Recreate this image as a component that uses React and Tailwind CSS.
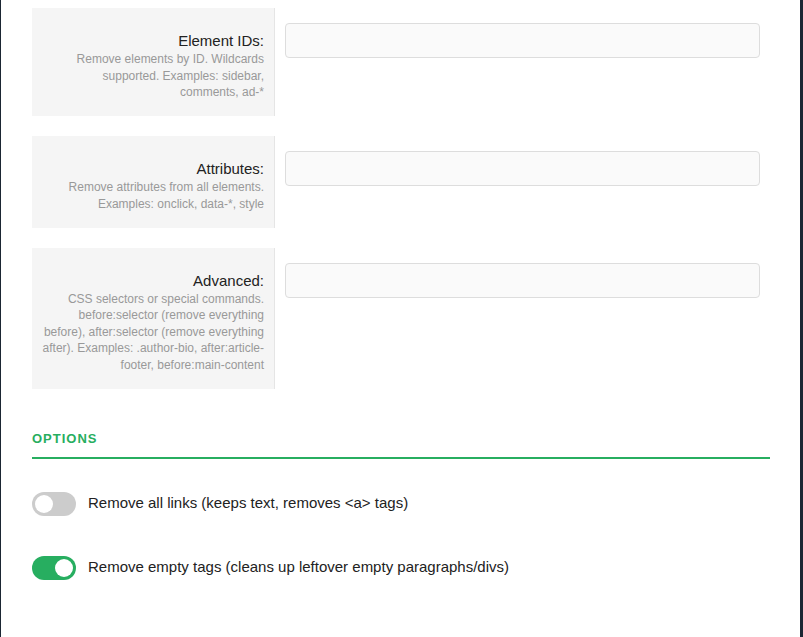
import { useState } from 'react'

const fields = [
  {
    label: 'Element IDs:',
    hint: 'Remove elements by ID. Wildcards supported. Examples: sidebar, comments, ad-*',
  },
  {
    label: 'Attributes:',
    hint: 'Remove attributes from all elements. Examples: onclick, data-*, style',
  },
  {
    label: 'Advanced:',
    hint: 'CSS selectors or special commands. before:selector (remove everything before), after:selector (remove everything after). Examples: .author-bio, after:article-footer, before:main-content',
  },
]

function Toggle({ on, onChange }) {
  return (
    <button
      type="button"
      onClick={onChange}
      className={`relative w-[44px] h-[24px] rounded-full shrink-0 transition-colors ${on ? 'bg-[#27ae60]' : 'bg-[#cccccc]'}`}
    >
      <span
        className={`absolute top-[3px] w-[18px] h-[18px] rounded-full bg-white transition-all ${on ? 'left-[23px]' : 'left-[3px]'}`}
      />
    </button>
  )
}

export default function App() {
  const [removeLinks, setRemoveLinks] = useState(false)
  const [removeEmpty, setRemoveEmpty] = useState(true)

  return (
    <div className="h-[637px] bg-[#1b2633] pl-[1px] pr-[3px] font-[family-name:'Liberation_Sans',Arial,sans-serif]">
      <div className="h-full bg-white pl-[31px] pr-[30px] pt-[8px] overflow-hidden">
        {/* Filter fields */}
        <div className="flex flex-col gap-[20px]">
          {fields.map((f) => (
            <div key={f.label} className="flex items-start">
              <div className="w-[243px] shrink-0 self-stretch bg-[#f5f5f5] border-r border-[#e5e5e5] pt-[23px] pb-[15.5px] px-[10px] text-right">
                <div className="text-[15px] leading-[20px] text-[#222]">{f.label}</div>
                <div className="text-[12px] leading-[16.5px] text-[#999]">{f.hint}</div>
              </div>
              <div className="flex-1 px-[10px] pt-[15px]">
                <input
                  type="text"
                  className="w-full h-[35px] rounded border border-[#dddddd] bg-[#fafafa] px-3 text-sm outline-none"
                />
              </div>
            </div>
          ))}
        </div>

        {/* Options */}
        <div className="mt-[41px] pb-[9px] border-b-2 border-[#27ae60]">
          <h3 className="text-[13px] leading-[18px] font-bold tracking-[1px] text-[#27ae60]">OPTIONS</h3>
        </div>

        <div className="mt-[33px] flex flex-col gap-[40px]">
          <label className="flex items-center gap-[12px]">
            <Toggle on={removeLinks} onChange={() => setRemoveLinks(!removeLinks)} />
            <span className="text-[15px] text-[#222]">Remove all links (keeps text, removes &lt;a&gt; tags)</span>
          </label>
          <label className="flex items-center gap-[12px]">
            <Toggle on={removeEmpty} onChange={() => setRemoveEmpty(!removeEmpty)} />
            <span className="text-[15px] text-[#222]">Remove empty tags (cleans up leftover empty paragraphs/divs)</span>
          </label>
        </div>
      </div>
    </div>
  )
}
